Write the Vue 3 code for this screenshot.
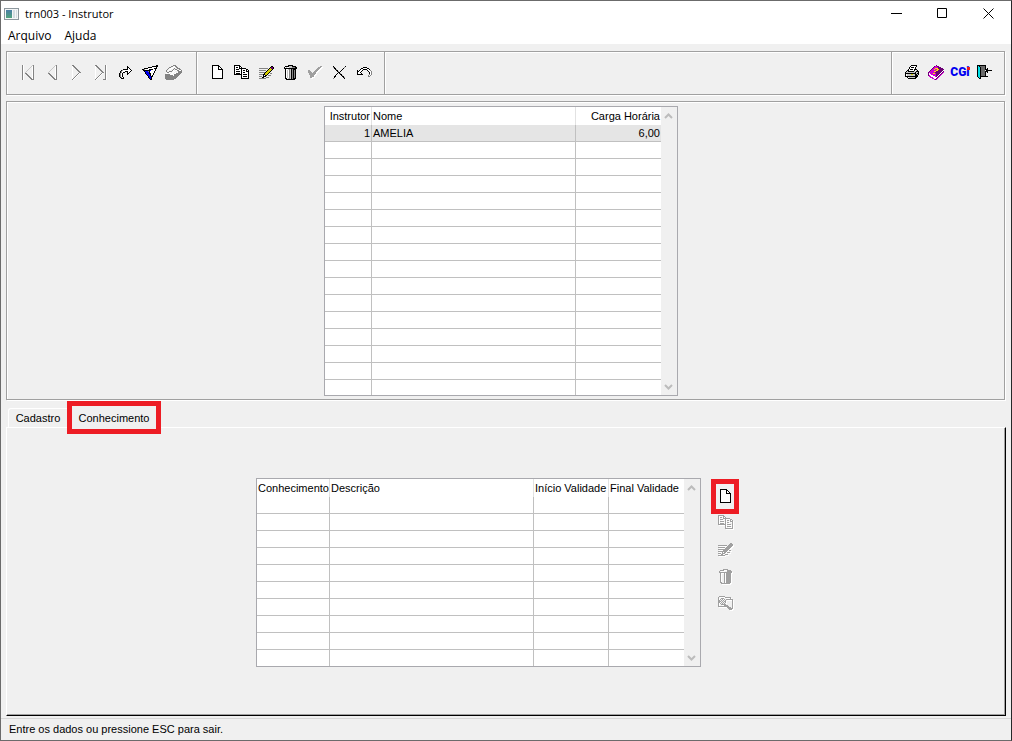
<script setup>
import { ref, h } from 'vue'

const palette = {
  K: '#000000', W: '#ffffff', G: '#848484', L: '#c6c6c6', Y: '#d6ce00', S: '#ffe800',
  B: '#0000f0', P: '#6b0074', M: '#d000d0', C: '#00e0e8', D: '#6a6a6a'
}

const bitmaps = {
  page: [
    'KKKKKKK....', 'KWWWWWKK...', 'KWWWWWKWK..', 'KWWWWWKWWK.', 'KWWWWWKKKKK',
    'KWWWWWWWWWK', 'KWWWWWWWWWK', 'KWWWWWWWWWK', 'KWWWWWWWWWK', 'KWWWWWWWWWK',
    'KWWWWWWWWWK', 'KWWWWWWWWWK', 'KWWWWWWWWWK', 'KKKKKKKKKKK'
  ],
  copy: [
    'KKKKKK.........', 'KWWWWKK........', 'KWKKWKWK.......', 'KWWWWKKKKKKK...',
    'KWKKKWWKWWWWKK.', 'KWWWWWWKWKKWKWK', 'KWKKKKWKWWWWKKK', 'KWWWWWWKWKKWWWK',
    'KWKKKKWKWWWWWWK', 'KKKKKKKKWKKKKWK', '.......KWWWWWWK', '.......KWKKKKWK',
    '.......KWWWWWWK', '.......KKKKKKKK'
  ],
  edit: [
    '............KK.', '...........KPPK', 'GGGGGGGGG.KYPPK', '.........KYYYK.',
    'GGGGGGG.KYYYK..', '.......KYYYK...', 'GGGGGGKYYYK....', '.....KYYYK.GG..',
    'GGGGKKYYK......', '....KWKK.GGG...', 'GGG.KKK........', '...KK..GGG.....', 'GGGGGGG........'
  ],
  trash: [
    '....KKKKK....', '.KKKKLLLKKKK.', 'KWLWWLLLGGGKK', 'KKKKKKKKKKKKK', '.KWWLGLKGKKK.',
    '.KWLWGLKGKGK.', '.KWLWGLKGKGK.', '.KWLWGLKGKGK.', '.KWLWGLKGKGK.', '.KWLWGLKGKGK.',
    '.KWLWGLKGKGK.', '.KWLWGLKGKGK.', '.KWLWGLKGKGK.', '.KKWLGLKGKKK.', '..KKKKKKKKK..'
  ],
  cancel: [
    'K...........K', 'GK.........G.', '.KK.......K..', '..KG.....K...', '...KK...K....',
    '....KG.K.....', '.....KK......', '....K.KG.....', '...K...KK....', '..K.....KG...',
    '.KK......KK..', '.K........KG.', 'G..........K.'
  ],
  check: [
    '............GG', '..........GGG.', '.........GGG..', '........GGG...', 'GG.....GGG....',
    'GGG...GGG.....', 'GGGG.GGG......', '.GGGGGGG......', '.GGGGGG.......', '..GGGG........',
    '..GGGG........', '..GG..........'
  ],
  undo: [
    '......KKKK.....', '....KKWWWWKK...', '...KWWKKKKWWK..', 'K.KWWK....KWWG.', 'KKWWK......KWWG',
    'KWWK........KWG', 'KWWWK.......KWG', 'KKKKKK......GWG', '...........GWG.', '...........GG..'
  ],
  go: [
    '........K....', '........KK...', '........KWK..', '....KKKKKWWK.', '..KGWWWWWWWWK',
    '.KGWWWKKKWWK.', '.KGWKK..KWK..', 'KGWK....KK...', 'KGWK....K....', 'KGWK.........',
    'KGWK.........', '.KGWK........', '..KKK........'
  ],
  filter: [
    '..............KK', '..........KKKKKK', '......KKKKWWWWK.', '..KKKKWWWWWWKKK.', 'KKGWWWWKKKKWWK..',
    '.KKKKKKKBWWWWK..', '..KBBBGKWWWWK...', '...KBBBKWWWWK...', '...KBBBKKWWK....', '....KBBBKWWK....',
    '.....KBBKWK.....', '......KBBKK.....', '......KBBK......', '.......KBK......', '........KK......'
  ],
  phone: [
    '........GGG......', '......GG.WGG.....', '....GG.WWW.GG....', '...G.WWW.G..GGG..',
    '..G.WW..G.GG..GG.', '.G.W...GW.WWGGWWG', '.G..GGG.WW...GGGG', '..GGWW.WW.W.WGGGG',
    '.WW.W.WW.WWGGGGG.', 'GGGGGWWWWGGGGGG..', 'GGGGGGGGWGGGGG...', 'GGGGGGGGGGGGG....',
    'GGGGGGGGGGGG.....', 'GGGGGGGGGGG......', '.GGGGGGGG........'
  ],
  printer: [
    '......KKKKKK..', '.....KWWWWWK..', '....KWKKKWK...', '....KWWWWWK...', '...KWKKKWKKK..',
    '..KKWWWWWKWLK.', '.KLKKKKKKLLKKK', 'KLLLLLLLLLKLLK', 'KKKKKKKKKKKLKK', 'KWLLLLYYLLKKLK',
    'KWLLLLLLLLKKK.', 'KKKKKKKKKKKKK.', '..KWLLLLLLKK..', '...KKKKKKKK...'
  ],
  book: [
    '........P.......', '......PMMPP.....', '.....PMMMMPPP...', '....PMMSSSPPPPP.', '...PMMSMMSSPPPPP',
    '..PMMMMMSSPPPPPW', '.PMMMMSSPPPPPPWP', 'PMMMMMMPPPPPPWPM', 'PWMMMSSMPPPPWPM.', 'PWWMMMMMPPPWPM..',
    'PMWWWMMMPPWPM...', '.MMWWWWMPWPM....', '..MMMWWWWPM.....', '....MMWWPM......', '......MPM.......'
  ],
  exit: [
    'KKKKKKKKK......', 'KCKDDDDDK......', 'KCCKDDDDK......', 'KCCKDDDDK.K....', 'KCCKDDDDKKK....',
    'KCCKDDDD.KKKKKK', 'KCCKDDDDKKK....', 'KCCKDDDDK.K....', 'KCCKDDDDK......', 'KCCKDDDDK......',
    'KCCKDDDDK......', 'KCCKKKKKKKK....', '.KCK...........', '..KK...........'
  ],
  search: [
    '.GGGGGG........', 'G......GGGGGG..', 'G..GGG......G..', 'G.GWGWG.GGGGGGG', 'GGWGWGWG......G',
    'GGGWGWGG......G', 'GGWGWGWG......G', 'G.GWGWG.......G', 'G..GGGGG......G', 'G.....GGGG....G',
    'GGGGGGGGGGG...G', '.........GGGG.G', '..........GGGGG', '...........GGG.'
  ],
  first: [
    'GW........LG', 'GW.......LWG', 'GW......L.WG', 'GW.....L..WG', 'GW....L...WG', 'GW...L....WG',
    'GW..L.....WG', 'GW.L......WG', 'GW.GG.....WG', 'GW..GG....WG', 'GW...GG...WG', 'GW....GG..WG',
    'GW.....GG.WG', 'GW......GGWG', 'GW.......GGG'
  ],
  prev: [
    '.......LG', '......LWG', '.....L.WG', '....L..WG', '...L...WG', '..L....WG', '.L.....WG', 'L......WG',
    'GG.....WG', '.GG....WG', '..GG...WG', '...GG..WG', '....GG.WG', '.....GGWG', '......GGG'
  ],
  next: [
    'GG.......', 'WGG......', 'W.GG.....', 'W..GG....', 'W...GG...', 'W....GG..', 'W.....GG.', 'W......GG',
    'W.....GW.', 'W....GW..', 'W...GW...', 'W..GW....', 'W.GW.....', 'WGW......', 'GW.......'
  ],
  last: [
    'GG........GW', 'WGG.......GW', 'W.GG......GW', 'W..GG.....GW', 'W...GG....GW', 'W....GG...GW', 'W.....GG..GW',
    'W......GG.GW', 'W.....GW..GW', 'W....GW...GW', 'W...GW....GW', 'W..GW.....GW', 'W.GW......GW', 'WGW.......GW', 'GW......GGGW'
  ]
}

const PixelIcon = (props) => {
  const rows = bitmaps[props.name]
  const width = rows[0].length
  const runs = {}
  rows.forEach((row, y) => {
    ;[...row].forEach((key, x) => {
      if (key === '.') return
      let fill = palette[key]
      if (props.muted) {
        if ('WL'.includes(key)) return
        fill = '#a0a0a0'
      }
      runs[fill] = (runs[fill] || '') + `M${x} ${y}h1v1h-1z`
    })
  })
  return h(
    'svg',
    { width, height: rows.length, viewBox: `0 0 ${width} ${rows.length}`, 'shape-rendering': 'crispEdges', 'aria-hidden': 'true' },
    Object.entries(runs).map(([fill, d]) => h('path', { fill, d }))
  )
}
PixelIcon.props = { name: String, muted: Boolean }

const navigation = [
  { icon: 'first', label: 'Primeiro' },
  { icon: 'prev', label: 'Anterior' },
  { icon: 'next', label: 'Próximo' },
  { icon: 'last', label: 'Último' },
  { icon: 'go', label: 'Ir para' },
  { icon: 'filter', label: 'Filtrar' },
  { icon: 'phone', label: 'Contato' }
]
const editing = [
  { icon: 'page', label: 'Novo' },
  { icon: 'copy', label: 'Copiar' },
  { icon: 'edit', label: 'Editar' },
  { icon: 'trash', label: 'Excluir' },
  { icon: 'check', label: 'Confirmar', muted: true },
  { icon: 'cancel', label: 'Cancelar' },
  { icon: 'undo', label: 'Desfazer' }
]
const rowActions = [
  { icon: 'copy', label: 'Copiar conhecimento' },
  { icon: 'edit', label: 'Editar conhecimento' },
  { icon: 'trash', label: 'Excluir conhecimento' },
  { icon: 'search', label: 'Consultar conhecimento' }
]

const tab = ref('Conhecimento')
const instructors = [{ id: 1, name: 'AMELIA', hours: '6,00' }]
</script>

<template>
  <div class="window">
    <header class="titlebar">
      <svg class="app-icon" width="15" height="12" viewBox="0 0 15 12" aria-hidden="true">
        <defs>
          <linearGradient id="pane" x1="0" y1="0" x2="0" y2="1">
            <stop offset="0" stop-color="#4a7ea6" />
            <stop offset="1" stop-color="#4fa37c" />
          </linearGradient>
        </defs>
        <rect x="0.5" y="0.5" width="14" height="11" fill="#f4f6f7" stroke="#8d979d" />
        <rect x="2" y="2" width="6" height="8" fill="url(#pane)" />
        <rect x="9" y="2" width="2" height="8" fill="#d4dde2" />
        <rect x="12" y="2" width="1" height="8" fill="#d4dde2" />
      </svg>
      <h1 class="title">trn003 - Instrutor</h1>
      <div class="controls">
        <button type="button" aria-label="Minimizar">
          <svg width="11" height="11" viewBox="0 0 11 11"><path d="M0 5.5h11" /></svg>
        </button>
        <button type="button" aria-label="Maximizar">
          <svg width="11" height="11" viewBox="0 0 11 11"><path d="M.5 .5h9v9h-9z" /></svg>
        </button>
        <button type="button" aria-label="Fechar">
          <svg width="11" height="11" viewBox="0 0 11 11"><path d="M.5 .5l10 10M10.500 .5l-10 10" /></svg>
        </button>
      </div>
    </header>

    <nav class="menubar">
      <button type="button">Arquivo</button>
      <button type="button">Ajuda</button>
    </nav>

    <div class="toolbar">
      <div class="group navigation">
        <button v-for="item in navigation" :key="item.icon" type="button" class="tool" :aria-label="item.label">
          <PixelIcon :name="item.icon" />
        </button>
      </div>
      <div class="group editing">
        <button v-for="item in editing" :key="item.icon" type="button" class="tool" :class="{ muted: item.muted }" :aria-label="item.label">
          <PixelIcon :name="item.icon" :muted="item.muted" />
        </button>
      </div>
      <div class="group filler"></div>
      <div class="group system">
        <button type="button" class="tool" aria-label="Imprimir"><PixelIcon name="printer" /></button>
        <button type="button" class="tool" aria-label="Manual"><PixelIcon name="book" /></button>
        <button type="button" class="tool brand">CGi</button>
        <button type="button" class="tool" aria-label="Sair"><PixelIcon name="exit" /></button>
      </div>
    </div>

    <section class="panel">
      <div class="grid">
        <table class="instructors">
          <colgroup><col class="w-id" /><col class="w-name" /><col class="w-hours" /></colgroup>
          <thead>
            <tr><th class="right">Instrutor</th><th>Nome</th><th class="right">Carga Horária</th></tr>
          </thead>
          <tbody>
            <tr v-for="row in instructors" :key="row.id" class="selected">
              <td class="right">{{ row.id }}</td><td>{{ row.name }}</td><td class="right">{{ row.hours }}</td>
            </tr>
            <tr v-for="n in 15" :key="'blank' + n"><td></td><td></td><td></td></tr>
          </tbody>
        </table>
        <div class="scroll">
          <button type="button" aria-label="Rolar para cima"><svg width="9" height="6" viewBox="0 0 9 6"><path d="M1 5l3.500-3.500L8 5" /></svg></button>
          <button type="button" aria-label="Rolar para baixo"><svg width="9" height="6" viewBox="0 0 9 6"><path d="M1 1l3.500 3.500L8 1" /></svg></button>
        </div>
      </div>
    </section>

    <div class="tabs" role="tablist">
      <button type="button" role="tab" class="tab" :aria-selected="tab === 'Cadastro'" @click="tab = 'Cadastro'">Cadastro</button>
      <button type="button" role="tab" class="tab highlighted" :aria-selected="tab === 'Conhecimento'" @click="tab = 'Conhecimento'">Conhecimento</button>
    </div>

    <main class="tabpage">
      <div class="grid">
        <table class="skills">
          <colgroup><col class="w-skill" /><col class="w-name" /><col class="w-date" /><col class="w-date" /></colgroup>
          <thead>
            <tr><th>Conhecimento</th><th>Descrição</th><th>Início Validade</th><th>Final Validade</th></tr>
          </thead>
          <tbody>
            <tr v-for="n in 10" :key="n"><td></td><td></td><td></td><td></td></tr>
          </tbody>
        </table>
        <div class="scroll">
          <button type="button" aria-label="Rolar para cima"><svg width="9" height="6" viewBox="0 0 9 6"><path d="M1 5l3.500-3.500L8 5" /></svg></button>
          <button type="button" aria-label="Rolar para baixo"><svg width="9" height="6" viewBox="0 0 9 6"><path d="M1 1l3.500 3.500L8 1" /></svg></button>
        </div>
      </div>
      <div class="actions">
        <button type="button" class="action highlighted" aria-label="Novo conhecimento"><PixelIcon name="page" /></button>
        <button v-for="item in rowActions" :key="item.icon" type="button" class="action muted" :aria-label="item.label">
          <PixelIcon :name="item.icon" :muted="true" />
        </button>
      </div>
    </main>

    <footer class="statusbar">Entre os dados ou pressione ESC para sair.</footer>
  </div>
</template>

<style>
body {
  margin: 0;
}
</style>

<style scoped>
.window {
  box-sizing: border-box;
  min-height: 100vh;
  display: flex;
  flex-direction: column;
  background: #f0f0f0;
  border: 1px solid #6b6b6b;
  border-right-color: #26282a;
  font-family: "Liberation Sans", Arial, sans-serif;
  font-size: 11px;
  line-height: 16px;
  color: #000;
}
button {
  margin: 0;
  padding: 0;
  border: 0;
  background: none;
  font: inherit;
  color: inherit;
}
svg {
  display: block;
}
.titlebar {
  display: flex;
  align-items: center;
  height: 25px;
  padding-left: 3px;
  background: #fff;
}
.title {
  flex: 1;
  margin: 0 0 0 6px;
  font: 400 11px/16px "Open Sans", "Segoe UI", sans-serif;
}
.controls {
  display: flex;
}
.controls button {
  width: 46px;
  height: 25px;
  display: flex;
  align-items: center;
  justify-content: center;
}
.controls path {
  fill: none;
  stroke: #000;
}
.menubar {
  display: flex;
  gap: 13px;
  height: 18px;
  padding-left: 7px;
  background: #fff;
  font: 400 12px/18px "Open Sans", "Segoe UI", sans-serif;
}
.menubar button {
  padding-top: 1px;
}
.toolbar,
.panel {
  border: 1px solid #a0a0a0;
  box-shadow: 1px 1px 0 #fff, inset 1px 1px 0 #fff;
  margin: 0 6px 0 5px;
}
.toolbar {
  display: flex;
  height: 42px;
  margin-top: 7px;
  margin-bottom: 6px;
}
.group {
  box-sizing: border-box;
  display: flex;
  align-items: center;
  justify-content: space-between;
  border-right: 1px solid #a0a0a0;
  box-shadow: 1px 0 0 #fff;
}
.navigation {
  width: 190px;
  padding: 0 10px 2px 9px;
}
.editing {
  width: 188px;
  padding: 0 8px 2px;
}
.filler {
  flex: 1;
}
.system {
  width: 112px;
  padding: 0 8px 2px;
  border-right: 0;
  box-shadow: none;
}
.tool {
  width: 24px;
  height: 24px;
  display: flex;
  align-items: center;
  justify-content: center;
}
.muted svg {
  filter: drop-shadow(1px 1px 0 #fff);
}
.brand {
  position: relative;
  font-family: Roboto, sans-serif;
  font-weight: 900;
  font-size: 12px;
  color: #0000f0;
}
.brand::after {
  content: "";
  position: absolute;
  right: 2px;
  top: 7px;
  width: 3px;
  height: 3px;
  background: #f01818;
}
.panel {
  display: flex;
  justify-content: center;
  padding: 4px 9px 3px 0;
}
.grid {
  display: flex;
  border: 1px solid #a9a9ae;
  background: #fff;
}
table {
  table-layout: fixed;
  border-collapse: separate;
  border-spacing: 0;
}
.instructors {
  width: 336px;
}
.skills {
  width: 427px;
}
.w-id {
  width: 47px;
}
.w-name {
  width: 204px;
}
.w-hours {
  width: 85px;
}
.w-skill {
  width: 73px;
}
.w-date {
  width: 75px;
}
th,
td {
  box-sizing: border-box;
  padding: 0 1px;
  text-align: left;
  font-weight: 400;
  white-space: nowrap;
}
th {
  height: 18px;
  border-right: 1px solid #e2e2e2;
}
td {
  height: 17px;
  border-right: 1px solid #c0c0c0;
  border-bottom: 1px solid #c0c0c0;
}
th:last-child,
td:last-child {
  border-right: 0;
}
tbody tr:last-child td {
  height: 15px;
  border-bottom: 0;
}
.skills tbody tr:last-child td {
  height: 16px;
}
.right {
  text-align: right;
}
.selected td {
  background: #e5e5e5;
}
.scroll {
  box-sizing: border-box;
  width: 16px;
  padding-right: 2px;
  display: flex;
  flex-direction: column;
  justify-content: space-between;
  background: #f0f0f0;
}
.scroll button {
  height: 17px;
  display: flex;
  align-items: center;
  justify-content: center;
}
.scroll path {
  fill: none;
  stroke: #bcbcbc;
  stroke-width: 2;
}
.tabs {
  display: flex;
  align-items: flex-end;
  height: 27px;
  padding-left: 7px;
}
.tab {
  width: 59px;
  height: 19px;
  border-top: 1px solid #fff;
  border-left: 1px solid #fff;
  border-top-left-radius: 3px;
}
.tab.highlighted {
  box-sizing: border-box;
  width: 94px;
  height: 33px;
  margin-bottom: -7px;
  border: 5px solid #ed1c24;
  border-radius: 0;
  background: #f0f0f0;
  z-index: 1;
}
.tabpage {
  flex: 1;
  display: flex;
  align-items: flex-start;
  justify-content: center;
  gap: 10px;
  margin: 0 5px 2px;
  padding: 50px 17px 47px 0;
  border: 1px solid #fff;
  border-right-color: #000;
  border-bottom-color: #000;
  box-shadow: inset -1px -1px 0 #a0a0a0;
}
.actions {
  display: flex;
  flex-direction: column;
  align-items: center;
  padding-top: 1px;
}
.action {
  box-sizing: border-box;
  width: 28px;
  height: 27px;
  padding-bottom: 1px;
  display: flex;
  align-items: center;
  justify-content: center;
}
.action.highlighted {
  height: 35px;
  margin-bottom: -5px;
  border: 5px solid #ed1c24;
}
.statusbar {
  height: 21px;
  padding-left: 8px;
  line-height: 21px;
  border-top: 1px solid #d7d7d7;
}
</style>
